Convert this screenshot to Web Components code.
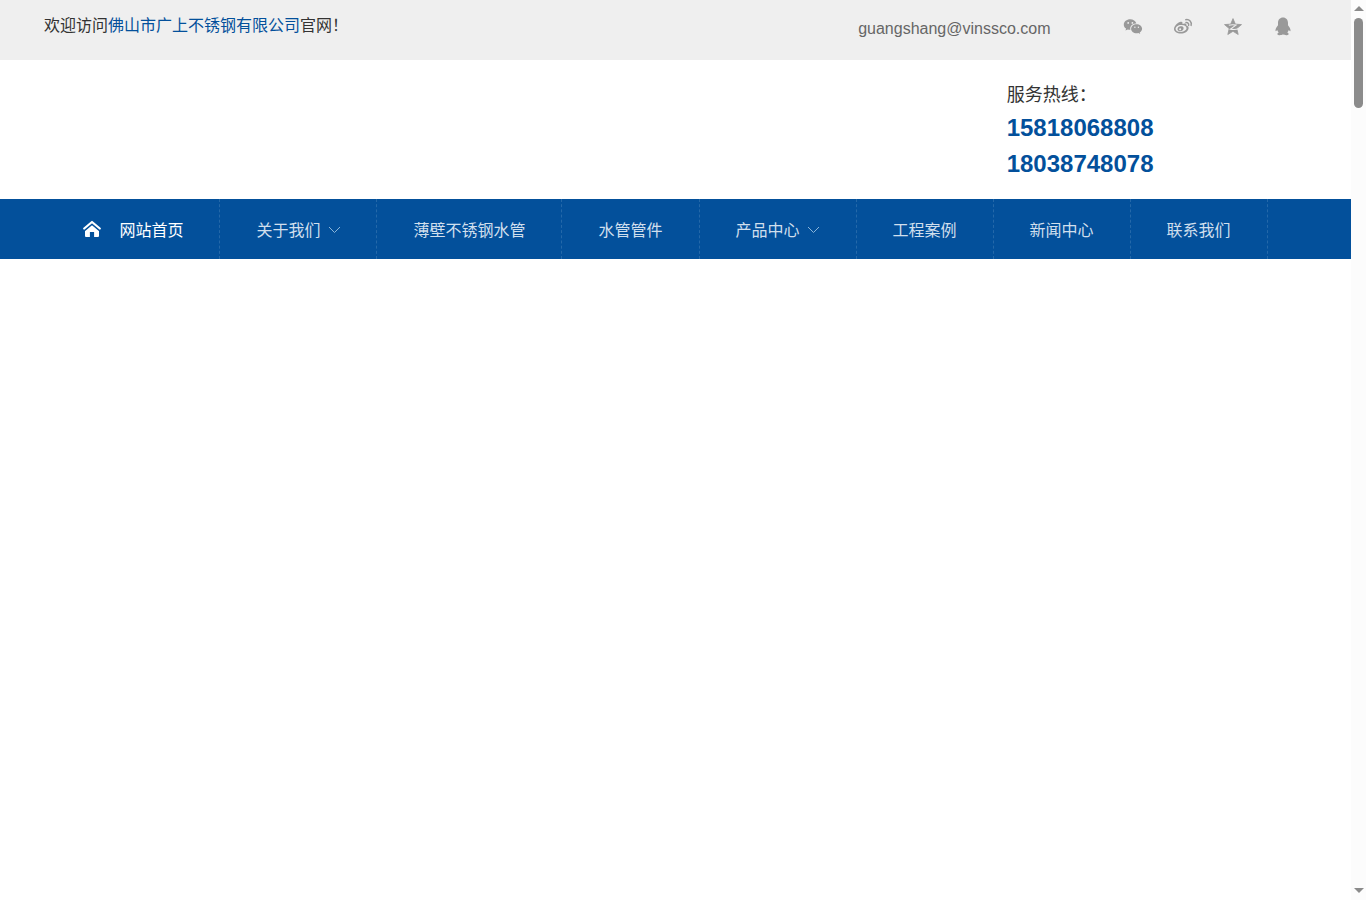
<!DOCTYPE html>
<html lang="zh-CN">
<head>
<meta charset="utf-8">
<title>佛山市广上不锈钢有限公司</title>
<style>
html,body{margin:0;height:100%;overflow:hidden;background:#fff}
body{font:16px/24px "Liberation Sans","Noto Sans CJK SC",sans-serif;color:#333}
</style>
</head>
<body>
<site-page></site-page>
<script>
const define = (name, html) => customElements.define(name, class extends HTMLElement {
  constructor() {
    super();
    this.attachShadow({mode: 'open'}).innerHTML = html;
  }
});

define('social-icons', `
<style>
:host{display:flex;gap:30px}
svg{width:20px;height:20px;fill:#999;display:block}
</style>
<svg viewBox="0 0 20 20"><path fill-rule="evenodd" d="M7.200 2.300C3.700 2.300.8 4.700.8 7.700c0 1.600.9 3 2.300 3.900l-.6 2 2.300-1.200c.8.2 1.500.3 2.600.3-.9-3.500 2-6.100 6-6.100C12.700 4 10.200 2.300 7.200 2.300ZM5.200 5a.9.900 0 1 1 0 1.800.9.900 0 0 1 0-1.800Zm4.200 0a.9.900 0 1 1 0 1.800.9.900 0 0 1 0-1.800ZM13.600 7.200c-3.100 0-5.500 2.100-5.500 4.600s2.400 4.500 5.500 4.500c.6 0 1.200-.1 1.800-.2l1.800 1-.5-1.700c1.500-.8 2.400-2.100 2.400-3.600 0-2.500-2.500-4.600-5.500-4.600ZM11.900 9.600a.7.700 0 1 1 0 1.400.7.700 0 0 1 0-1.400Zm3.500 0a.7.700 0 1 1 0 1.400.7.700 0 0 1 0-1.400Z"/></svg>
<svg viewBox="0 0 20 20"><path fill-rule="evenodd" d="M6.800 5.100C9 4 10 5 9.400 7c2.300-.9 4.500-.8 4 1.500 1.700.5 2.500 1.500 2.200 3-.6 3-4 5-7.700 5C4 16.500 1 14.700 1 12c0-2.400 2.800-5.600 5.800-6.900ZM8 8.100c-3 .1-5.500 1.800-5.400 3.900.1 2 2.600 3.200 5.600 2.900 3-.2 5.400-1.800 5.300-3.800C13.400 9 11 7.900 8 8.100Z"/><path fill-rule="evenodd" d="M8 9.200a3 3 0 0 0-3.500 3.300c.3 1.500 2 2.200 3.700 1.700 1.800-.6 2.800-2.100 2.300-3.600C10.200 9.700 9.100 9.200 8 9.200ZM7.200 11.300a1 1 0 1 1-.1 2 1 1 0 0 1 .1-2Z"/><path fill="none" stroke="#999" stroke-width="1.500" stroke-linecap="round" d="M12.800 2.700c3.500-.6 6.300 2.100 5.300 5.700M13 5.500c1.800-.2 3.100 1 2.600 2.900"/></svg>
<svg viewBox="0 0 20 20"><path stroke="#999" stroke-width=".8" stroke-linejoin="round" d="m10 1.600 2.300 5.500 6.200.5-4.700 4 1.400 5.900L10 14.300l-5.200 3.200 1.400-5.900-4.700-4 6.200-.5Z"/><path fill="none" stroke="#efefef" stroke-width="1.100" d="M5.800 8.200q3.500-.8 7.200-.1L7.400 12.100q4.200.8 8.400-.3"/></svg>
<svg viewBox="0 0 20 20"><path d="M10 .6C6.900.6 5 3 5 6v2.200C3.500 10 2.300 12 2.500 13.700c.1.800.8.600 1.700-.6.300 1 .8 1.800 1.500 2.500-1.200.5-1.600 1.200-1.200 1.900.6 1 4 1 5.500-.2 1.500 1.200 4.900 1.200 5.500.2.400-.7 0-1.400-1.200-1.900.7-.7 1.200-1.500 1.500-2.500.9 1.200 1.600 1.400 1.700.6.200-1.700-1-3.700-2.500-5.500V6C15 3 13.100.6 10 .6Z"/></svg>`);

define('top-bar', `
<style>
:host{display:flex;justify-content:space-between;height:60px;box-sizing:border-box;background:#efefef;padding:0 58.500px 0 44px}
.welcome{margin-top:14px}
b{font-weight:400;color:#03509b}
.right{display:flex}
.mail{margin:17px 72px 0 0;color:#666}
social-icons{margin-top:17px}
</style>
<div class="welcome">欢迎访问<b>佛山市广上不锈钢有限公司</b>官网！</div>
<div class="right"><span class="mail">guangshang@vinssco.com</span><social-icons></social-icons></div>`);

define('hot-line', `
<style>
:host{display:flex;justify-content:flex-end;height:139px;box-sizing:border-box;padding:19px 197.500px 0 0;background:#fff}
p{margin:0;font-size:18px;line-height:33px;height:31px}
strong{display:block;font-size:24px;line-height:36px;color:#03509b}
</style>
<div><p>服务热线：</p><strong><slot></slot></strong></div>`);

define('nav-item', `
<style>
:host{display:flex;align-items:center;box-sizing:border-box;height:60px;padding:4px 0 0 36.500px;color:#d0dfed;border-right:1px dashed #2468a9;white-space:nowrap}
:host([active]){color:#fff;padding-left:0}
svg{display:none;flex:none}
:host([active]) .home{display:block;margin:-4px 18.500px 0 0}
:host([menu]) .arrow{display:block;margin:-3px 0 0 7.500px}
</style>
<svg class="home" width="18" height="18" viewBox="0 0 18 18"><path fill="#fff" d="M9 4.800 16 10.300V16q0 1-1 1h-3.900v-5H6.900v5H3q-1 0-1-1v-5.700Z"/><path fill="none" stroke="#03509b" stroke-width="3.600" d="M1 9.500 9 2.800l8 6.700"/><path fill="none" stroke="#fff" stroke-width="2.200" stroke-linecap="round" stroke-linejoin="round" d="M1.200 8.500 9 2l7.800 6.500"/></svg>
<slot></slot>
<svg class="arrow" width="13" height="8" viewBox="0 0 13 8"><path d="m1 1 5.500 5.500L12 1" fill="none" stroke="#8bb5d9"/></svg>`);

define('main-nav', `
<style>
:host{display:grid;grid-template-columns:137px 157px 185px 138px 157px 137px 137px 137px;height:60px;box-sizing:border-box;padding-left:83px;background:#03509b}
nav-item.shift{padding-left:35.500px}
</style>
<nav-item active>网站首页</nav-item>
<nav-item menu>关于我们</nav-item>
<nav-item>薄壁不锈钢水管</nav-item>
<nav-item>水管管件</nav-item>
<nav-item class="shift" menu>产品中心</nav-item>
<nav-item class="shift">工程案例</nav-item>
<nav-item class="shift">新闻中心</nav-item>
<nav-item class="shift">联系我们</nav-item>`);

define('scroll-bar', `
<style>
:host{display:flex;flex-direction:column;align-items:center;width:15px;height:100vh;background:#fcfcfc;box-sizing:border-box;padding:6px 0 7px}
i{border:5px solid transparent;border-top:0;border-bottom:5px solid #8b8b8b}
i.down{margin-top:auto;border-bottom:0;border-top:5px solid #8b8b8b}
.thumb{width:9px;height:90px;margin-top:7px;border-radius:5px;background:#8b8b8b}
</style>
<i></i><div class="thumb"></div><i class="down"></i>`);

define('site-page', `
<style>
:host{display:grid;grid-template-columns:1fr 15px;height:100vh}
</style>
<main><top-bar></top-bar><hot-line>15818068808<br>18038748078</hot-line><main-nav></main-nav></main>
<scroll-bar></scroll-bar>`);
</script>
</body>
</html>
